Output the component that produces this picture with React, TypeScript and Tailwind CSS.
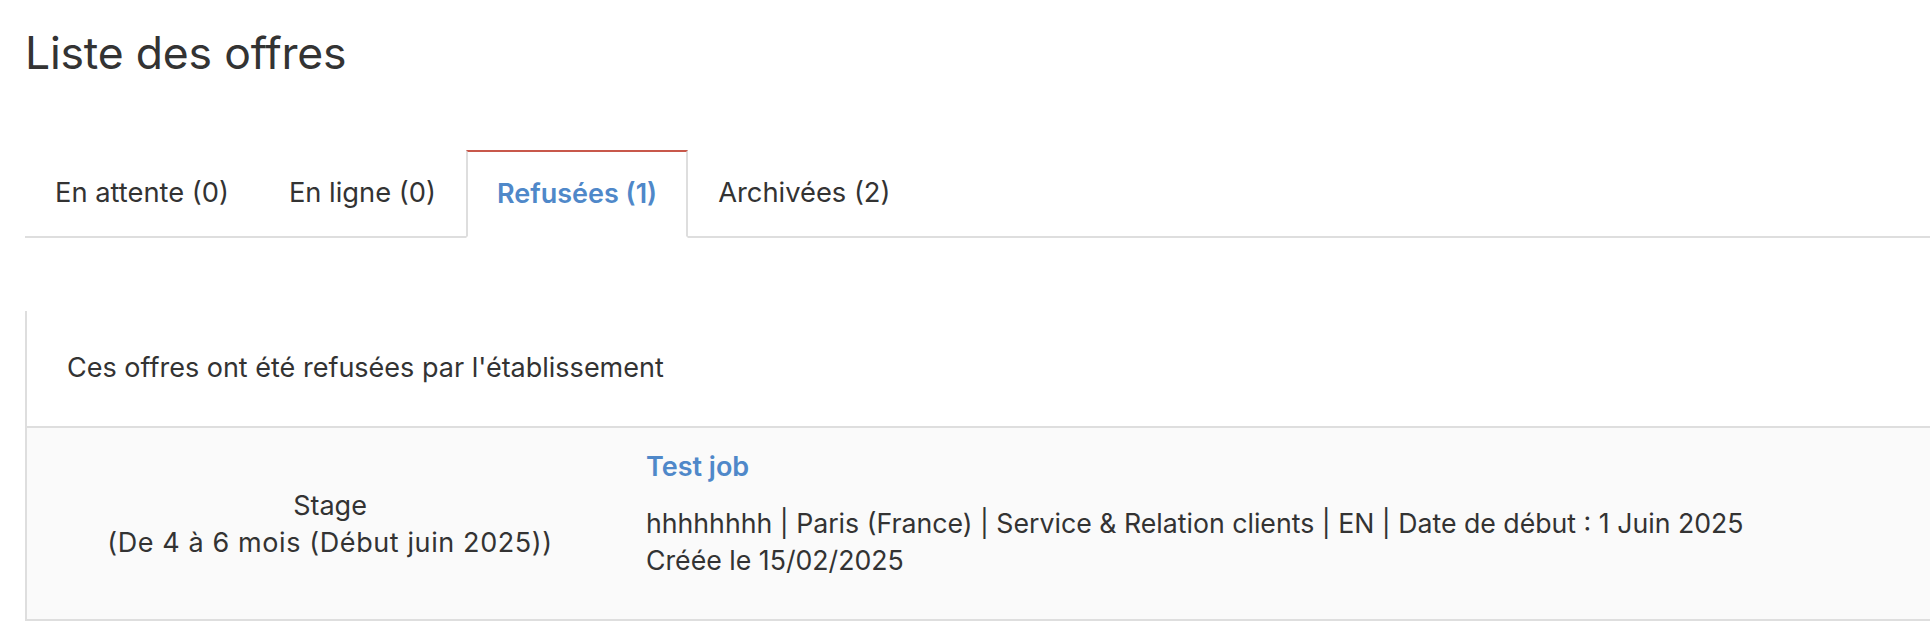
import { useState } from 'react';

const tabs = [
  { key: 'attente', label: 'En attente (0)' },
  { key: 'ligne', label: 'En ligne (0)' },
  { key: 'refusees', label: 'Refusées (1)' },
  { key: 'archivees', label: 'Archivées (2)' },
];

const App = () => {
  const [active, setActive] = useState('refusees');

  return (
    <div className="min-h-screen bg-white font-['Inter','Noto_Sans',sans-serif] text-[#333333]">
      <div className="pl-[25px]">
        {/* Title */}
        <h1 className="pt-[26px] text-[44.5px] font-normal leading-[54px] tracking-[-0.2px]">Liste des offres</h1>

        {/* Tabs */}
        <nav className="mt-[70px] flex border-b-2 border-[#dedede]">
          {tabs.map((tab) => {
            const isActive = tab.key === active;
            return (
              <button
                key={tab.key}
                onClick={() => setActive(tab.key)}
                className={
                  isActive
                    ? '-mb-[2px] h-[88px] border-x-2 border-t-2 border-b-2 border-x-[#dedede] border-t-[#c8584b] border-b-white bg-white px-[29px] text-[27px] font-semibold text-[#4f88c9]'
                    : 'h-[86px] px-[30px] text-[27.3px] font-normal text-[#333333]'
                }
              >
                {tab.label}
              </button>
            );
          })}
        </nav>

        {/* Panel */}
        <section className="mt-[73px] border-b-2 border-l-2 border-[#dedede]">
          <div className="flex h-[115px] items-center pl-[40px] text-[27px]">
            Ces offres ont été refusées par l'établissement
          </div>
          <div className="flex h-[193px] border-t-2 border-[#dedede] bg-[#fafafa]">
            <div className="flex w-[606px] flex-col items-center justify-center text-center text-[27px] leading-[37px]">
              <span>Stage</span>
              <span className="tracking-[0.6px]">(De 4 à 6 mois (Début juin 2025))</span>
            </div>
            <div className="flex flex-col pl-[13px] pt-[20px] text-[26.7px] leading-[37px]">
              <a href="#" className="text-[27px] font-semibold text-[#4f88c9]">Test job</a>
              <p className="mt-[20px]">
                hhhhhhhh | Paris (France) | Service &amp; Relation clients | EN | Date de début : 1 Juin 2025
              </p>
              <p>Créée le 15/02/2025</p>
            </div>
          </div>
        </section>
      </div>
    </div>
  );
};

export default App;
